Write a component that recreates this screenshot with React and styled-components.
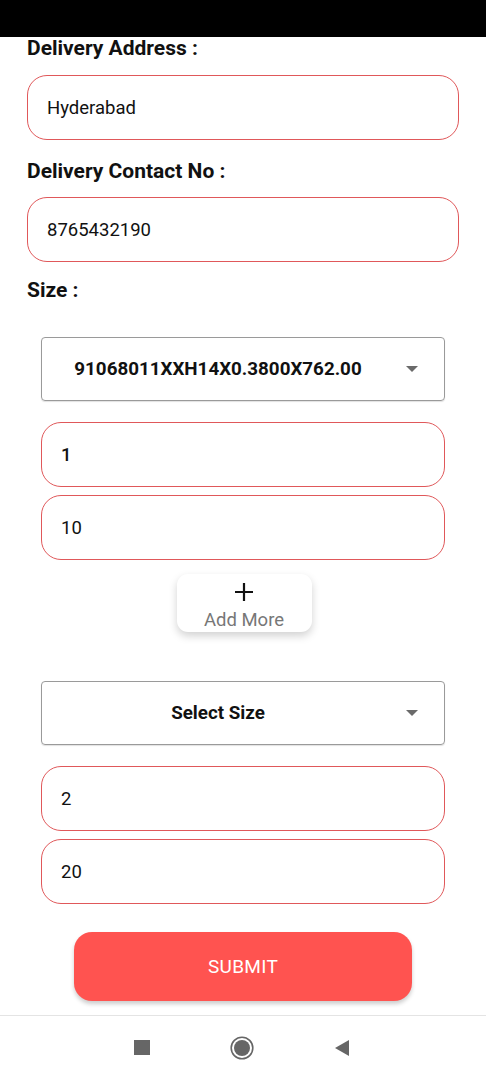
import React, { useState } from 'react';
import styled, { createGlobalStyle } from 'styled-components';

const GlobalStyle = createGlobalStyle`
  body {
    margin: 0;
    background: #fff;
    font-family: Roboto, "Noto Sans", sans-serif;
  }
`;

const Screen = styled.div`
  width: 486px;
  height: 1080px;
  display: flex;
  flex-direction: column;
  overflow: hidden;
  background: #fff;
`;

const StatusBar = styled.div`
  height: 37px;
  flex-shrink: 0;
  background: #000;
`;

const Form = styled.div`
  display: flex;
  flex-direction: column;
  padding: 0 27px;
`;

const Label = styled.div`
  font-size: 21px;
  font-weight: 700;
  line-height: 22px;
  color: #111;
  margin-top: ${({ $top }) => $top || 0}px;
`;

const Field = styled.div`
  height: ${({ $h }) => $h || 65}px;
  box-sizing: border-box;
  border: 1px solid #e0585a;
  border-radius: 20px;
  display: flex;
  align-items: center;
  padding-left: 19px;
  padding-top: 1px;
  font-size: 18.5px;
  color: #111;
  margin-top: ${({ $top }) => $top || 0}px;
  margin-left: ${({ $inset }) => $inset || 0}px;
  margin-right: ${({ $inset }) => $inset || 0}px;
  font-weight: ${({ $bold }) => ($bold ? 500 : 400)};
`;

const Dropdown = styled.div`
  height: 64px;
  box-sizing: border-box;
  border: 1px solid #9a9a9a;
  border-radius: 4px;
  margin: ${({ $top }) => $top}px 14px 0;
  display: flex;
  align-items: center;
  padding-right: 26px;
  box-shadow: 0 1px 1px rgba(0, 0, 0, 0.12);
`;

const DropText = styled.div`
  flex: 1;
  text-align: center;
  font-size: 18.8px;
  font-weight: 700;
  color: #111;
  padding-right: 12px;
`;

const Caret = styled.div`
  width: 0;
  height: 0;
  border-left: 6px solid transparent;
  border-right: 6px solid transparent;
  border-top: 6px solid #6a6a6a;
`;

const AddWrap = styled.div`
  display: flex;
  justify-content: center;
  margin-top: 14px;
  padding-left: 2px;
`;

const AddCard = styled.button`
  width: 135px;
  height: 58px;
  border: none;
  border-radius: 11px;
  background: #fff;
  box-shadow: 0 4px 8px rgba(0, 0, 0, 0.18);
  display: flex;
  flex-direction: column;
  align-items: center;
  justify-content: flex-start;
  padding: 9px 0 0;
  font-family: Roboto, sans-serif;
  cursor: pointer;
`;

const Plus = styled.svg`
  display: block;
  margin-bottom: 8px;
`;

const AddLabel = styled.span`
  font-size: 18.5px;
  color: #777;
  line-height: 22px;
`;

const SubmitButton = styled.button`
  align-self: center;
  width: 338px;
  height: 69px;
  margin-top: 28px;
  border: none;
  border-radius: 18px;
  background: #ff5350;
  color: #fff;
  font-family: Roboto, sans-serif;
  font-size: 19px;
  letter-spacing: 0.3px;
  box-shadow: 0 3px 4px rgba(0, 0, 0, 0.2);
  cursor: pointer;
`;

const NavBar = styled.div`
  margin-top: 14px;
  border-top: 1px solid #e4e4e4;
  display: flex;
  justify-content: center;
  align-items: center;
  height: 64px;
  flex: none;
  gap: 80px;
  padding-right: 2px;
`;

const NavIcon = styled.svg`
  display: block;
`;

const SizeRow = ({ value, qty, rate }) => (
  <>
    <Dropdown $top={value === 'Select Size' ? 49 : 36}>
      <DropText>{value}</DropText>
      <Caret />
    </Dropdown>
    <Field $top={21} $inset={14} $bold={value !== 'Select Size'}>{qty}</Field>
    <Field $top={8} $inset={14}>{rate}</Field>
  </>
);

export default function App() {
  const [sizes] = useState([
    { value: '91068011XXH14X0.3800X762.00', qty: '1', rate: '10' },
    { value: 'Select Size', qty: '2', rate: '20' },
  ]);

  return (
    <Screen>
      <GlobalStyle />
      <StatusBar />
      <Form>
        <Label>Delivery Address :</Label>
        <Field $top={16}>Hyderabad</Field>
        <Label $top={20}>Delivery Contact No :</Label>
        <Field $top={15}>8765432190</Field>
        <Label $top={17}>Size :</Label>

        <SizeRow {...sizes[0]} />
        <AddWrap>
          <AddCard>
            <Plus width="18" height="18" viewBox="0 0 18 18">
              <path d="M9 0v18M0 9h18" stroke="#111" strokeWidth="2.2" />
            </Plus>
            <AddLabel>Add More</AddLabel>
          </AddCard>
        </AddWrap>
        <SizeRow {...sizes[1]} />

        <SubmitButton>SUBMIT</SubmitButton>
      </Form>
      <NavBar>
        <NavIcon width="16" height="16" viewBox="0 0 16 16">
          <rect x="0" y="0" width="16" height="15" fill="#666" />
        </NavIcon>
        <NavIcon width="24" height="24" viewBox="0 0 24 24">
          <circle cx="12" cy="12" r="10.8" fill="none" stroke="#666" strokeWidth="1.6" />
          <circle cx="12" cy="12" r="8" fill="#666" />
        </NavIcon>
        <NavIcon width="16" height="16" viewBox="0 0 16 16">
          <path d="M1 8L15 0v16z" fill="#666" />
        </NavIcon>
      </NavBar>
    </Screen>
  );
}
